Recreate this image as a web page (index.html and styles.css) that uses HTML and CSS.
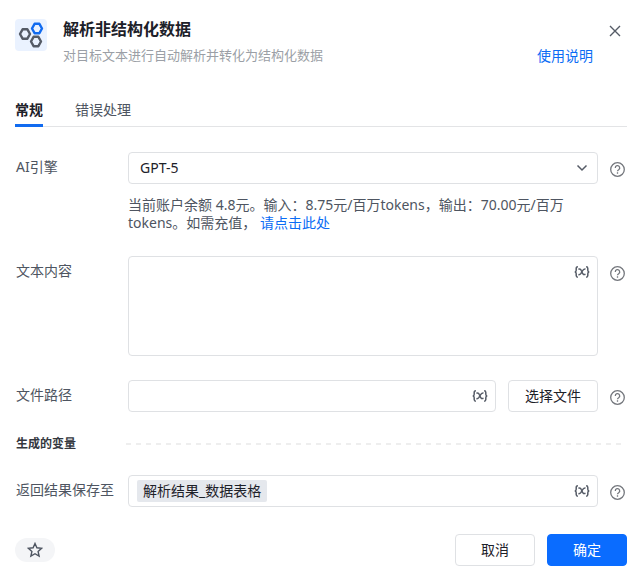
FILE: index.html
```html
<!DOCTYPE html>
<html lang="zh-CN">
<head>
<meta charset="utf-8">
<meta name="viewport" content="width=device-width, initial-scale=1">
<title>解析非结构化数据</title>
<link rel="stylesheet" href="styles.css">
</head>
<body>
<svg class="sprite" aria-hidden="true">
  <symbol id="icon-help" viewBox="0 0 15 15">
    <circle cx="7.5" cy="7.5" r="6.8"/>
    <path d="M5.300 6a2.200 2.200 0 1 1 3.400 1.700c-.8.500-1.200.8-1.200 1.500M7.500 10.300v1.400"/>
  </symbol>
  <symbol id="icon-variable" viewBox="0 0 16 12">
    <path d="M3.900.8C2.500.8 2.200 1.300 2.200 2.500v1.800C2.200 5.400 1.800 6 .7 6c1.100 0 1.500.6 1.500 1.700v1.800c0 1.200.3 1.700 1.700 1.700M12.100.8c1.400 0 1.700.5 1.700 1.700v1.800c0 1.100.4 1.700 1.500 1.700-1.100 0-1.500.6-1.500 1.700v1.800c0 1.200-.3 1.700-1.700 1.700"/>
    <path d="M4.400 3.200c1.600-.6 2.400 0 2.900 1.300l1.100 2.600c.5 1.300 1.400 1.900 3.100 1.200M11.500 3.100c-1.200-.2-2 .4-2.700 1.300L7 7.400c-.7.900-1.400 1.500-2.600 1.200"/>
  </symbol>
  <symbol id="icon-ring" viewBox="-7 -7 14 14">
    <path d="M-2.400-4.700h4.800L5 0 2.400 4.700h-4.800L-5 0z"/>
  </symbol>
</svg>

<main class="dialog">
  <header class="header">
    <svg class="logo" viewBox="0 0 32 32" aria-hidden="true">
      <rect class="logo-bg" width="32" height="32" rx="4"/>
      <use class="ring ring-dark" href="#icon-ring" x="3" y="8" width="14" height="14"/>
      <use class="ring ring-dark" href="#icon-ring" x="14" y="15.500" width="14" height="14"/>
      <use class="ring ring-blue" href="#icon-ring" x="15" y="2.500" width="14" height="14"/>
    </svg>
    <div class="heading">
      <h1>解析非结构化数据</h1>
      <p>对目标文本进行自动解析并转化为结构化数据</p>
    </div>
    <a class="link manual" href="#manual">使用说明</a>
    <button class="icon-button close" type="button" aria-label="关闭">
      <svg viewBox="0 0 12 12" width="12" height="12" aria-hidden="true"><path d="M1 1l10 10M11 1L1 11"/></svg>
    </button>
  </header>

  <nav class="tabs">
    <button class="tab active" type="button">常规</button>
    <button class="tab" type="button">错误处理</button>
  </nav>

  <form class="form">
    <div class="row">
      <label for="engine">AI引擎</label>
      <div>
        <div class="field">
          <select id="engine"><option>GPT-5</option></select>
          <svg class="chevron" viewBox="0 0 12 8" aria-hidden="true"><path d="M1.500 1.500L6 6l4.500-4.500"/></svg>
        </div>
        <p class="hint">当前账户余额 4.8元。输入：8.75元/百万tokens，输出：70.00元/百万tokens。如需充值， <a class="link" href="#recharge">请点击此处</a></p>
      </div>
      <button class="icon-button help" type="button" aria-label="帮助"><svg><use href="#icon-help"/></svg></button>
    </div>

    <div class="row">
      <label for="content">文本内容</label>
      <div class="field tall">
        <textarea id="content"></textarea>
        <button class="icon-button variable" type="button" aria-label="插入变量"><svg><use href="#icon-variable"/></svg></button>
      </div>
      <button class="icon-button help" type="button" aria-label="帮助"><svg><use href="#icon-help"/></svg></button>
    </div>

    <div class="row">
      <label for="path">文件路径</label>
      <div class="file">
        <div class="field">
          <input id="path" type="text">
          <button class="icon-button variable" type="button" aria-label="插入变量"><svg><use href="#icon-variable"/></svg></button>
        </div>
        <button class="button choose" type="button">选择文件</button>
      </div>
      <button class="icon-button help" type="button" aria-label="帮助"><svg><use href="#icon-help"/></svg></button>
    </div>

    <div class="section">
      <h2>生成的变量</h2>
      <div class="dashes"></div>
    </div>

    <div class="row">
      <label for="result">返回结果保存至</label>
      <div class="field">
        <span class="chip">解析结果_数据表格</span>
        <input id="result" type="text">
        <button class="icon-button variable" type="button" aria-label="插入变量"><svg><use href="#icon-variable"/></svg></button>
      </div>
      <button class="icon-button help" type="button" aria-label="帮助"><svg><use href="#icon-help"/></svg></button>
    </div>
  </form>

  <footer class="footer">
    <button class="favorite" type="button" aria-label="收藏">
      <svg viewBox="0 0 16 16" width="16" height="16" aria-hidden="true"><path d="M8 1.500l1.900 4.300 4.700.5-3.500 3.100 1 4.700L8 11.700l-4.100 2.400 1-4.700L1.400 6.300l4.700-.5z"/></svg>
    </button>
    <button class="button" type="button">取消</button>
    <button class="button primary" type="button">确定</button>
  </footer>
</main>
</body>
</html>
```

FILE: styles.css
```css
* {
  box-sizing: border-box;
}

body {
  margin: 0;
  background: #fff;
  color: #4e5561;
  font: 14px/18px "Noto Sans", "Noto Sans CJK SC", sans-serif;
}

h1,
h2,
p {
  margin: 0;
}

button,
input,
select,
textarea {
  margin: 0;
  padding: 0;
  border: 0;
  background: none;
  color: #1d2129;
  font: inherit;
}

button {
  cursor: pointer;
}

svg {
  display: block;
  fill: none;
}

.sprite {
  display: none;
}

.dialog {
  padding: 19px 10px 8px 15px;
}

.header {
  display: flex;
  align-items: flex-start;
}

.logo {
  flex: none;
  width: 32px;
  height: 32px;
}

.logo-bg {
  fill: #eaf2ff;
}

.ring {
  stroke-width: 2.4;
  stroke-linejoin: round;
}

.ring-dark {
  stroke: #555b66;
}

.ring-blue {
  stroke: #116bf0;
}

.heading {
  flex: 1;
  margin-left: 16px;
}

.heading h1 {
  color: #1d2129;
  font-size: 16px;
  line-height: 20px;
}

.heading p {
  margin-top: 7px;
  color: #9b9fa6;
  font-size: 13px;
  line-height: 18px;
}

.link {
  color: #0a6cf5;
  text-decoration: none;
}

.manual {
  margin-top: 28px;
}

.icon-button {
  flex: none;
  stroke: #555b66;
}

.close {
  margin: 6px 6px 0 16px;
}

.close svg {
  stroke-width: 1.4;
}

.tabs {
  display: flex;
  gap: 32px;
  margin-top: 35px;
  border-bottom: 1px solid #e3e4e6;
}

.tab {
  margin-bottom: -1px;
  padding-bottom: 4px;
  border-bottom: 3px solid transparent;
  color: #4e5561;
  line-height: 20px;
}

.tab.active {
  border-color: #116bf0;
  color: #1d2129;
  font-weight: 700;
}

.form {
  display: flex;
  flex-direction: column;
  gap: 24px;
  padding: 25px 2px 0 1px;
}

.row {
  display: grid;
  grid-template-columns: 112px 1fr 15px;
  align-items: start;
}

.row > label {
  line-height: 30px;
}

.field {
  position: relative;
  display: flex;
  align-items: center;
  flex: 1;
  height: 32px;
  padding: 0 7px 0 8px;
  border: 1px solid #dfe1e4;
  border-radius: 4px;
}

.field.tall {
  height: 100px;
  align-items: flex-start;
  padding: 9px 7px 9px 8px;
}

.field input,
.field textarea {
  flex: 1;
  min-width: 0;
  height: 100%;
  outline: 0;
  resize: none;
}

.field select {
  position: absolute;
  inset: 0;
  width: 100%;
  padding: 0 32px 0 11px;
  outline: 0;
  appearance: none;
}

.chevron {
  width: 12px;
  height: 8px;
  margin: 0 2px 0 auto;
  stroke: #555b66;
  stroke-width: 1.5;
}

.variable svg {
  width: 16px;
  height: 12px;
  stroke-width: 1.5;
}

.row > .help {
  margin: 10px 0 0;
}

.row > :nth-child(2) {
  margin-right: 12px;
}

.help svg {
  width: 15px;
  height: 15px;
  stroke: #74777d;
  stroke-width: 1.3;
}

.hint {
  margin-top: 12px;
}

.file {
  display: flex;
  gap: 12px;
}

.button {
  width: 80px;
  height: 32px;
  border: 1px solid #dfe1e4;
  border-radius: 4px;
}

.button.choose {
  width: 90px;
}

.button.primary {
  border-color: #0a6cff;
  background: #0a6cff;
  color: #fff;
}

.section {
  display: grid;
  grid-template-columns: 110px 1fr;
  align-items: center;
  padding-right: 4px;
}

.section h2 {
  color: #34383f;
  font-size: 12px;
  line-height: 15px;
}

.dashes {
  height: 2px;
  background: repeating-linear-gradient(90deg, #eee 0 5px, transparent 5px 10px);
}

.chip {
  padding: 0 6px;
  border-radius: 2px;
  background: #e5e8ed;
  color: #1d2129;
  line-height: 22px;
}

.footer {
  display: flex;
  align-items: center;
  gap: 12px;
  margin-top: 27px;
}

.favorite {
  display: grid;
  place-items: center;
  width: 40px;
  height: 24px;
  margin-right: auto;
  border-radius: 12px;
  background: #f4f5f7;
  stroke: #4e5561;
  stroke-width: 1.4;
}
```
